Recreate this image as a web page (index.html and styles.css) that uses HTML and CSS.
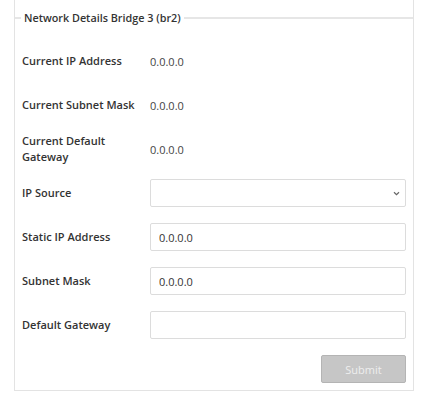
FILE: index.html
```html
<!DOCTYPE html>
<html lang="en">
<head>
    <meta charset="UTF-8">
    <meta name="viewport" content="width=device-width, initial-scale=1.0">
    <title>Network Details</title>
    <link rel="stylesheet" href="styles.css">
</head>
<body>
    <div class="panel">
        <fieldset class="net-form">
            <legend>Network Details Bridge 3 (br2)</legend>

            <div class="form-row">
                <label>Current IP Address</label>
                <span class="value">0.0.0.0</span>
            </div>
            <div class="form-row">
                <label>Current Subnet Mask</label>
                <span class="value">0.0.0.0</span>
            </div>
            <div class="form-row">
                <label>Current Default Gateway</label>
                <span class="value">0.0.0.0</span>
            </div>
            <div class="form-row">
                <label for="ip-source">IP Source</label>
                <div class="select-wrap">
                    <select id="ip-source" class="field"></select>
                    <svg class="chevron" width="7" height="5" viewBox="0 0 7 5">
                        <path d="M1 1.2 L3.5 3.6 L6 1.2" fill="none" stroke="#666" stroke-width="1.2"/>
                    </svg>
                </div>
            </div>
            <div class="form-row">
                <label for="static-ip">Static IP Address</label>
                <input id="static-ip" class="field" type="text" value="0.0.0.0">
            </div>
            <div class="form-row">
                <label for="subnet">Subnet Mask</label>
                <input id="subnet" class="field" type="text" value="0.0.0.0">
            </div>
            <div class="form-row">
                <label for="gateway">Default Gateway</label>
                <input id="gateway" class="field" type="text" value="">
            </div>

            <div class="actions">
                <button class="submit-button" disabled>Submit</button>
            </div>
        </fieldset>
    </div>
</body>
</html>
```

FILE: styles.css
```css
body {
    margin: 0;
    background-color: #fff;
    font-family: "Open Sans", "Noto Sans", sans-serif;
    color: #333;
}
.panel {
    margin: 0 8px 0 14px;
    border: 1px solid #e3e3e3;
    border-top: none;
    padding: 10px 0 7px 0;
}
.net-form {
    margin: 0;
    border: none;
    border-top: 2px solid #e6e6e6;
    padding: 22px 7px 0 7px;
}
.net-form legend {
    margin-left: -1px;
    padding: 0 3px;
    font-size: 10.8px;
    font-weight: 600;
    color: #333;
}
.form-row {
    display: flex;
    align-items: center;
    height: 28px;
    margin-bottom: 16px;
}
.form-row label {
    width: 128px;
    flex-shrink: 0;
    font-size: 11px;
    font-weight: 600;
    line-height: 16px;
    color: #333;
}
.value {
    font-size: 11px;
    color: #444;
}
.field {
    box-sizing: border-box;
    flex: 1;
    width: 100%;
    height: 28px;
    border: 1px solid #dcdcdc;
    border-radius: 2px;
    background: #fff;
    padding: 0 8px;
    font-family: inherit;
    font-size: 11px;
    color: #333;
    outline: none;
}
.select-wrap {
    position: relative;
    flex: 1;
    display: flex;
}
.select-wrap select {
    appearance: none;
}
.chevron {
    position: absolute;
    right: 6px;
    top: 12px;
}
.actions {
    display: flex;
    justify-content: flex-end;
}
.submit-button {
    width: 85px;
    height: 28px;
    border: 1px solid #b4b4b4;
    border-radius: 2px;
    background-color: #c6c6c6;
    color: #eeeeee;
    font-family: inherit;
    font-size: 11px;
}
```
